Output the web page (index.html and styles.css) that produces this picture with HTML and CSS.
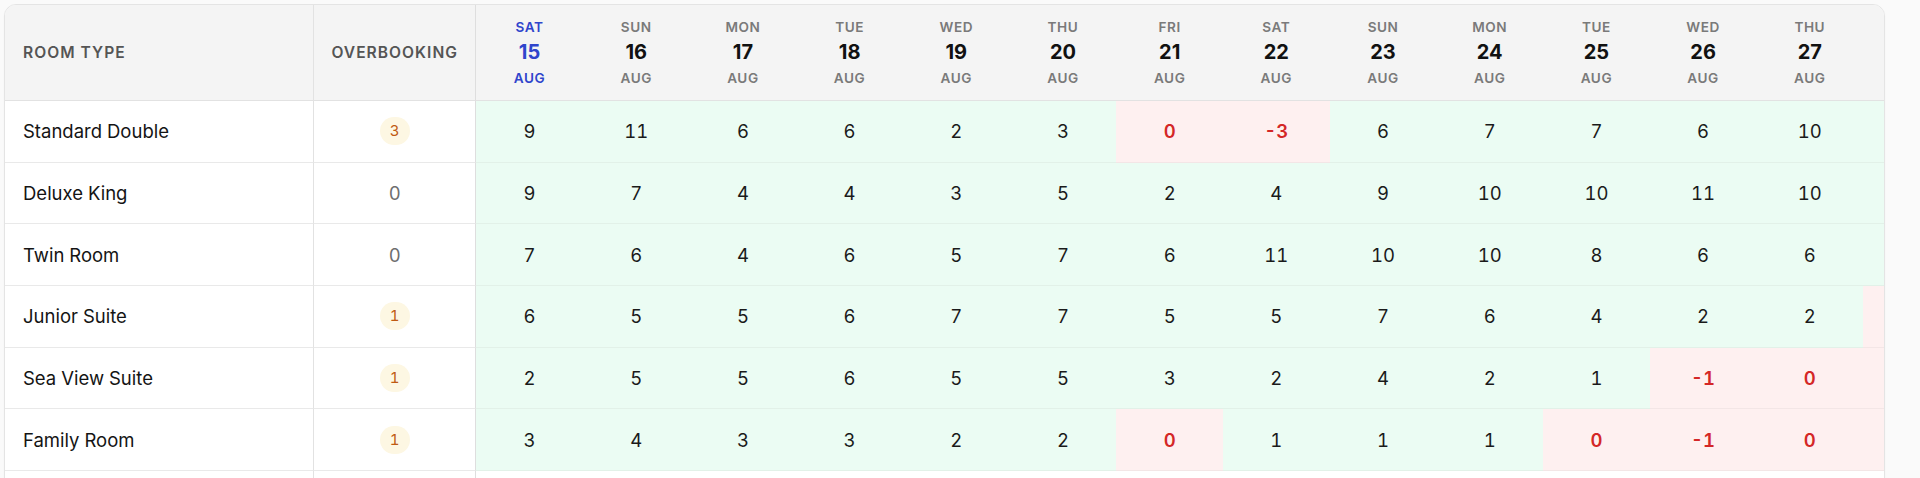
FILE: index.html
```html
<!DOCTYPE html>
<html lang="en">
<head>
<meta charset="utf-8">
<title>Room availability</title>
<link rel="stylesheet" href="styles.css">
</head>
<body>
<div class="board">
  <table class="grid">
    <colgroup>
      <col class="c-room"><col class="c-over">
      <col class="c-day"><col class="c-day"><col class="c-day"><col class="c-day"><col class="c-day"><col class="c-day"><col class="c-day"><col class="c-day"><col class="c-day"><col class="c-day"><col class="c-day"><col class="c-day"><col class="c-day"><col class="c-day">
    </colgroup>
    <thead>
      <tr>
        <th class="h-room">Room type</th>
        <th class="h-over">Overbooking</th>
        <th class="h-day today"><span class="dow">Sat</span><span class="dnum">15</span><span class="mon">Aug</span></th>
        <th class="h-day"><span class="dow">Sun</span><span class="dnum">16</span><span class="mon">Aug</span></th>
        <th class="h-day"><span class="dow">Mon</span><span class="dnum">17</span><span class="mon">Aug</span></th>
        <th class="h-day"><span class="dow">Tue</span><span class="dnum">18</span><span class="mon">Aug</span></th>
        <th class="h-day"><span class="dow">Wed</span><span class="dnum">19</span><span class="mon">Aug</span></th>
        <th class="h-day"><span class="dow">Thu</span><span class="dnum">20</span><span class="mon">Aug</span></th>
        <th class="h-day"><span class="dow">Fri</span><span class="dnum">21</span><span class="mon">Aug</span></th>
        <th class="h-day"><span class="dow">Sat</span><span class="dnum">22</span><span class="mon">Aug</span></th>
        <th class="h-day"><span class="dow">Sun</span><span class="dnum">23</span><span class="mon">Aug</span></th>
        <th class="h-day"><span class="dow">Mon</span><span class="dnum">24</span><span class="mon">Aug</span></th>
        <th class="h-day"><span class="dow">Tue</span><span class="dnum">25</span><span class="mon">Aug</span></th>
        <th class="h-day"><span class="dow">Wed</span><span class="dnum">26</span><span class="mon">Aug</span></th>
        <th class="h-day"><span class="dow">Thu</span><span class="dnum">27</span><span class="mon">Aug</span></th>
        <th class="h-day"><span class="dow">Fri</span><span class="dnum">28</span><span class="mon">Aug</span></th>
      </tr>
    </thead>
    <tbody>
      <tr>
        <td class="room">Standard Double</td>
        <td class="over"><span class="badge">3</span></td>
        <td class="ok">9</td><td class="ok">11</td><td class="ok">6</td><td class="ok">6</td><td class="ok">2</td><td class="ok">3</td><td class="full">0</td><td class="full">-3</td><td class="ok">6</td><td class="ok">7</td><td class="ok">7</td><td class="ok">6</td><td class="ok">10</td><td class="ok">8</td>
      </tr>
      <tr>
        <td class="room">Deluxe King</td>
        <td class="over"><span class="zero">0</span></td>
        <td class="ok">9</td><td class="ok">7</td><td class="ok">4</td><td class="ok">4</td><td class="ok">3</td><td class="ok">5</td><td class="ok">2</td><td class="ok">4</td><td class="ok">9</td><td class="ok">10</td><td class="ok">10</td><td class="ok">11</td><td class="ok">10</td><td class="ok">9</td>
      </tr>
      <tr>
        <td class="room">Twin Room</td>
        <td class="over"><span class="zero">0</span></td>
        <td class="ok">7</td><td class="ok">6</td><td class="ok">4</td><td class="ok">6</td><td class="ok">5</td><td class="ok">7</td><td class="ok">6</td><td class="ok">11</td><td class="ok">10</td><td class="ok">10</td><td class="ok">8</td><td class="ok">6</td><td class="ok">6</td><td class="ok">5</td>
      </tr>
      <tr>
        <td class="room">Junior Suite</td>
        <td class="over"><span class="badge">1</span></td>
        <td class="ok">6</td><td class="ok">5</td><td class="ok">5</td><td class="ok">6</td><td class="ok">7</td><td class="ok">7</td><td class="ok">5</td><td class="ok">5</td><td class="ok">7</td><td class="ok">6</td><td class="ok">4</td><td class="ok">2</td><td class="ok">2</td><td class="full">0</td>
      </tr>
      <tr>
        <td class="room">Sea View Suite</td>
        <td class="over"><span class="badge">1</span></td>
        <td class="ok">2</td><td class="ok">5</td><td class="ok">5</td><td class="ok">6</td><td class="ok">5</td><td class="ok">5</td><td class="ok">3</td><td class="ok">2</td><td class="ok">4</td><td class="ok">2</td><td class="ok">1</td><td class="full">-1</td><td class="full">0</td><td class="full">-1</td>
      </tr>
      <tr>
        <td class="room">Family Room</td>
        <td class="over"><span class="badge">1</span></td>
        <td class="ok">3</td><td class="ok">4</td><td class="ok">3</td><td class="ok">3</td><td class="ok">2</td><td class="ok">2</td><td class="full">0</td><td class="ok">1</td><td class="ok">1</td><td class="ok">1</td><td class="full">0</td><td class="full">-1</td><td class="full">0</td><td class="full">0</td>
      </tr>
      <tr class="total">
        <td class="room">Total available</td>
        <td class="over"></td>
        <td>36</td><td>38</td><td>27</td><td>31</td><td>24</td><td>29</td><td>21</td><td>20</td><td>37</td><td>36</td><td>30</td><td>23</td><td>30</td><td>21</td>
      </tr>
    </tbody>
  </table>
</div>
</body>
</html>
```

FILE: styles.css
```css
html, body {
  margin: 0;
  height: 100%;
  overflow: hidden;
}

body {
  background: #fafafa;
  font-family: Inter, "Liberation Sans", sans-serif;
  color: #161616;
  padding: 4px 0 0 4px;
  box-sizing: border-box;
}

.board {
  width: 1881px;
  box-sizing: border-box;
  background: #ffffff;
  border: 1px solid #e4e4e4;
  border-radius: 12px;
  overflow: hidden;
  box-shadow: 0 1px 2px rgba(0, 0, 0, 0.03);
}

.grid {
  table-layout: fixed;
  width: 1965px;
  border-collapse: separate;
  border-spacing: 0;
}

.c-room { width: 309px; }
.c-over { width: 162px; }
.c-day { width: 106.67px; }

.grid th {
  background: #f4f4f4;
  height: 95px;
  padding: 0;
  border-bottom: 1px solid #e2e2e2;
  font-weight: 600;
  vertical-align: middle;
}

.h-room,
.h-over {
  font-size: 15.6px;
  letter-spacing: 0.065em;
  text-transform: uppercase;
  color: #555555;
}

.h-room {
  text-align: left;
  padding-left: 18px !important;
  border-right: 1px solid #e2e2e2;
}

.h-over {
  text-align: center;
  border-right: 1px solid #dedede;
}

.h-day {
  text-align: center;
}

.h-day span {
  display: block;
}

.dow,
.mon {
  font-size: 13.6px;
  font-weight: 600;
  letter-spacing: 0.04em;
  text-transform: uppercase;
  color: #7a7a7a;
  line-height: 20px;
}

.dnum {
  font-size: 20px;
  font-weight: 700;
  color: #111111;
  line-height: 31px;
}

.today .dow,
.today .dnum,
.today .mon {
  color: #2f45cc;
}

.grid td {
  height: 60.67px;
  padding: 0;
  border-bottom: 1px solid #e9e9e9;
  text-align: center;
  vertical-align: middle;
  font-size: 18.5px;
  font-variant-numeric: tabular-nums;
  color: #1a1a1a;
}

.grid td.room {
  text-align: left;
  padding-left: 18px;
  border-right: 1px solid #e2e2e2;
  color: #141414;
}

.grid td.over {
  border-right: 1px solid #dedede;
}

.badge {
  display: inline-block;
  min-width: 28px;
  height: 28px;
  line-height: 28px;
  padding: 0 10px;
  box-sizing: border-box;
  border-radius: 14px;
  background: #fdf7e3;
  color: #bf5a12;
  font-size: 15px;
}

.zero {
  color: #6e6e6e;
}

.grid td.ok {
  background: #ebfcf3;
  border-bottom-color: #e2f1e8;
}

.grid td.full {
  background: #fef0f0;
  color: #d42727;
  font-weight: 600;
  border-bottom-color: #f3e6e6;
}

.total td {
  background: #ffffff;
}
```
